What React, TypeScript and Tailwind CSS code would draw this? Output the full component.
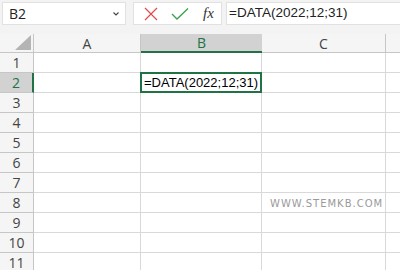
import React from "react";

const cols = [
  { name: "A", w: "w-[107px]" },
  { name: "B", w: "w-[121px]" },
  { name: "C", w: "w-[124px]" },
  { name: "", w: "w-[100px]" },
];

const rows = [1, 2, 3, 4, 5, 6, 7, 8, 9, 10, 11];

function FormulaBar() {
  return (
    <div className="h-[34px] bg-[#f3f3f3] flex items-start pt-[2px] pl-[2px]">
      <div className="w-[124px] h-[23px] bg-white border border-[#e1e1e1] flex items-center justify-between pl-[6px] pr-[5px]">
        <span className="text-[14px] text-[#222]">B2</span>
        <svg width="8" height="6" viewBox="0 0 8 6">
          <path d="M1.5 1.5 L4 4 L6.5 1.5" fill="none" stroke="#444" strokeWidth="1.1" />
        </svg>
      </div>
      <div className="ml-[7px] w-[89px] h-[23px] bg-white border border-[#e1e1e1] flex items-center pl-[10px]">
        <svg width="14" height="14" viewBox="0 0 14 14">
          <path d="M1 1 L13 13 M13 1 L1 13" stroke="#e24a4a" strokeWidth="1.2" />
        </svg>
        <svg className="ml-[13px]" width="18" height="14" viewBox="0 0 18 14">
          <path d="M1 7 L6 12 L17 1.5" fill="none" stroke="#3aa04a" strokeWidth="1.3" />
        </svg>
        <span className="ml-[14px] italic text-[15px] text-[#333] font-['Liberation_Serif',serif]">fx</span>
      </div>
      <div className="ml-[4px] flex-1 h-[23px] bg-white border border-[#e1e1e1] border-r-0 flex items-center pl-[2px]">
        <span className="text-[13.5px] text-[#222] font-['Liberation_Sans',sans-serif]">=DATA(2022;12;31)</span>
      </div>
    </div>
  );
}

function HeaderRow() {
  return (
    <div className="flex h-[19px] bg-[#f5f5f5]">
      <div className="w-[34px] shrink-0 border-r border-b border-[#c6c6c6] flex items-end justify-end pr-[2px] pb-[2px]">
        <svg width="16" height="15" viewBox="0 0 16 15">
          <path d="M16 0 L16 15 L0 15 Z" fill="#b4b4b4" />
        </svg>
      </div>
      {cols.map((c, i) => (
        <div
          key={i}
          className={
            c.name === "B"
              ? `${c.w} shrink-0 bg-[#d2d2d2] border-b-2 border-[#217346] flex items-center justify-center text-[14px] text-[#217346]`
              : `${c.w} shrink-0 border-r border-b border-[#c6c6c6] flex items-center justify-center text-[14px] text-[#444]`
          }
        >
          {c.name}
        </div>
      ))}
    </div>
  );
}

function Row({ n }: { n: number }) {
  const sel = n === 2;
  return (
    <div className="flex h-[20px]">
      <div
        className={
          sel
            ? "w-[34px] shrink-0 bg-[#d2d2d2] border-r-[2px] border-r-[#217346] border-b border-b-[#c6c6c6] flex items-center justify-center text-[14px] text-[#217346]"
            : "w-[34px] shrink-0 bg-[#f5f5f5] border-r border-b border-[#c6c6c6] flex items-center justify-center text-[14px] text-[#444]"
        }
      >
        {n}
      </div>
      {cols.map((c, i) => (
        <div key={i} className={`${c.w} shrink-0 relative border-r border-b border-[#d9d9d9]`}>
          {sel && c.name === "B" && (
            <div className="absolute -left-[1px] -top-[1px] w-[122px] h-[21px] border-2 border-[#217346] flex items-center pl-[2px] z-10">
              <span className="text-[13px] text-black whitespace-nowrap font-['Liberation_Sans',sans-serif]">=DATA(2022;12;31)</span>
            </div>
          )}
          {n === 8 && c.name === "C" && (
            <span className="absolute left-[8px] top-[3px] text-[10px] tracking-[1px] text-[#9a9a9a] font-['DejaVu_Sans',sans-serif] whitespace-nowrap">
              WWW.STEMKB.COM
            </span>
          )}
        </div>
      ))}
    </div>
  );
}

export default function App() {
  return (
    <div className="w-[400px] h-[270px] overflow-hidden bg-white font-['Open_Sans',sans-serif]">
      <FormulaBar />
      <HeaderRow />
      {rows.map((n) => (
        <Row key={n} n={n} />
      ))}
    </div>
  );
}
